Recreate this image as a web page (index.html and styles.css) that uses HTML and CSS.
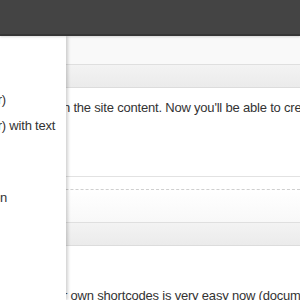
FILE: index.html
```html
<!DOCTYPE html>
<html lang="en">
<head>
  <meta charset="UTF-8" />
  <title>Shortcodes</title>
  <link rel="stylesheet" href="styles.css">
</head>
<body>
  <div class="topbar"></div>

  <div class="content">
    <div class="postbox">
      <div class="box-top"></div>
      <div class="box-head"></div>
      <div class="inside">
        <p class="line">You can use shortcodes in the site content. Now you'll be able to create columns, buttons and more.</p>
      </div>
      <div class="box-foot"></div>
    </div>

    <div class="postbox">
      <div class="box-top second"></div>
      <div class="box-head"></div>
      <div class="inside">
        <p class="line low">Adding your own shortcodes is very easy now (documentation included).</p>
      </div>
    </div>
  </div>

  <!-- menu que abre por cima do conteudo -->
  <div class="menu">
    <ul>
      <li>Insert (Shortcode Helper)</li>
      <li>Insert (Shortcode Helper) with text</li>
      <li class="gap">Documentation</li>
    </ul>
  </div>
</body>
</html>
```

FILE: styles.css
```css
body {
  margin: 0;
  background: #fff;
  font-family: 'Liberation Sans', Arial, sans-serif;
  font-size: 13px;
  letter-spacing: -0.2px;
  color: #333;
  overflow: hidden;
}
.topbar {
  height: 34px;
  background: #444;
  border-bottom: 2px solid #363636;
  box-shadow: 0 1px 2px rgba(0, 0, 0, 0.15);
  position: relative;
  z-index: 2;
}
.box-top {
  height: 28px;
  background: #f9f9f9;
  border-bottom: 1px solid #dfdfdf;
}
.box-head {
  height: 22px;
  background: linear-gradient(#f3f3f3, #ebebeb);
  border-bottom: 1px solid #dcdcdc;
}
.line {
  margin: 12px 0 0 -77px;
  white-space: nowrap;
  line-height: 16px;
}
.box-foot {
  margin-top: 60px;
  height: 12px;
  border-top: 1px solid #e2e2e2;
  border-bottom: 1px dashed #cfcfcf;
}
.box-top.second {
  height: 32px;
  background: linear-gradient(#fff, #f8f8f8);
}
.line.low {
  margin: 42px 0 0 0;
}
.menu {
  position: absolute;
  top: 36px;
  left: 0;
  bottom: 0;
  width: 66px;
  background: #fff;
  box-shadow: 2px 0 3px rgba(0, 0, 0, 0.18);
  overflow: hidden;
  z-index: 1;
}
.menu ul {
  list-style: none;
  margin: 56px 0 0 -135px;
  padding: 0;
  white-space: nowrap;
}
.menu li {
  line-height: 16px;
  margin-bottom: 10px;
}
.menu li.gap {
  margin-top: 56px;
  width: 142px;
  text-align: right;
}
```
